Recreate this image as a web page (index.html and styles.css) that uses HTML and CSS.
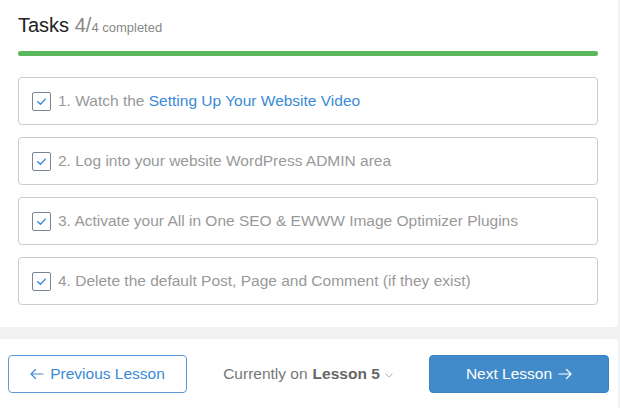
FILE: index.html
```html
<!DOCTYPE html>
<html lang="en">
<head>
    <meta charset="UTF-8">
    <title>Lesson Tasks</title>
    <link rel="stylesheet" href="styles.css">
</head>
<body>
    <div class="card tasks-card">
        <div class="tasks-title">
            Tasks <span class="count">4/</span><span class="count-small">4 completed</span>
        </div>
        <div class="progress"><div class="progress-fill" style="width: 100%;"></div></div>

        <div class="task-list">
            <div class="task">
                <span class="checkbox"><svg viewBox="0 0 12 12" fill="none" stroke="currentColor" stroke-width="1.3" stroke-linecap="round" stroke-linejoin="round"><path d="M2.5 6.2 5 8.5 9.5 3.8"/></svg></span>
                <span class="task-text">1. Watch the <a href="#" class="task-link">Setting Up Your Website Video</a></span>
            </div>
            <div class="task">
                <span class="checkbox"><svg viewBox="0 0 12 12" fill="none" stroke="currentColor" stroke-width="1.3" stroke-linecap="round" stroke-linejoin="round"><path d="M2.5 6.2 5 8.5 9.5 3.8"/></svg></span>
                <span class="task-text">2. Log into your website WordPress ADMIN area</span>
            </div>
            <div class="task">
                <span class="checkbox"><svg viewBox="0 0 12 12" fill="none" stroke="currentColor" stroke-width="1.3" stroke-linecap="round" stroke-linejoin="round"><path d="M2.5 6.2 5 8.5 9.5 3.8"/></svg></span>
                <span class="task-text">3. Activate your All in One SEO &amp; EWWW Image Optimizer Plugins</span>
            </div>
            <div class="task">
                <span class="checkbox"><svg viewBox="0 0 12 12" fill="none" stroke="currentColor" stroke-width="1.3" stroke-linecap="round" stroke-linejoin="round"><path d="M2.5 6.2 5 8.5 9.5 3.8"/></svg></span>
                <span class="task-text">4. Delete the default Post, Page and Comment (if they exist)</span>
            </div>
        </div>
    </div>

    <div class="card lesson-nav">
        <button class="nav-button prev">
            <svg class="arrow" viewBox="0 0 14 12" fill="none" stroke="currentColor" stroke-width="1.2" stroke-linecap="round" stroke-linejoin="round"><path d="M13 6H1M5.5 1.5 1 6l4.5 4.5"/></svg>
            Previous Lesson
        </button>
        <div class="current">Currently on <strong>Lesson 5</strong><svg class="caret" viewBox="0 0 10 6" fill="none" stroke="currentColor" stroke-width="1" stroke-linecap="round" stroke-linejoin="round"><path d="M1 1l4 4 4-4"/></svg></div>
        <button class="nav-button next">
            Next Lesson
            <svg class="arrow" viewBox="0 0 14 12" fill="none" stroke="currentColor" stroke-width="1.2" stroke-linecap="round" stroke-linejoin="round"><path d="M1 6h12M8.5 1.5 13 6l-4.5 4.5"/></svg>
        </button>
    </div>
</body>
</html>
```

FILE: styles.css
```css
body {
    margin: 0;
    background: #f2f2f2;
    font-family: "Liberation Sans", Arial, sans-serif;
    overflow: hidden;
}

.card {
    background: white;
    margin-right: 2px;
}

.tasks-card {
    padding: 12px 20px 22px 18px;
    border-radius: 0 0 4px 0;
}

.tasks-title {
    font-size: 20px;
    line-height: 26px;
    color: #222;
}

.count {
    color: #888;
}

.count-small {
    font-size: 13px;
    color: #888;
}

.progress {
    margin-top: 10px;
    height: 5px;
    border-radius: 3px;
    background: #e5e5e5;
}

.progress-fill {
    height: 100%;
    border-radius: 3px;
    background: #5cb85c;
}

.task-list {
    margin-top: 21px;
    display: flex;
    flex-direction: column;
    gap: 12px;
}

.task {
    height: 46px;
    border: 1px solid #cccccc;
    border-radius: 4px;
    display: flex;
    align-items: center;
    padding-left: 13px;
}

.checkbox {
    width: 17px;
    height: 17px;
    border: 1px solid #7a8594;
    border-radius: 2px;
    color: #3a8ad6;
    display: flex;
    align-items: center;
    justify-content: center;
    margin-right: 7px;
}

.checkbox svg {
    width: 13px;
    height: 13px;
}

.task-text {
    font-size: 15.5px;
    color: #999;
}

.task-link {
    color: #3a8ad6;
    text-decoration: none;
}

.lesson-nav {
    margin-top: 12px;
    padding: 16px 9px 15px 8px;
    border-radius: 0 4px 0 0;
    display: flex;
    justify-content: space-between;
    align-items: center;
}

.nav-button {
    height: 38px;
    border-radius: 4px;
    font-family: inherit;
    font-size: 15.5px;
    cursor: pointer;
    display: flex;
    align-items: center;
    justify-content: center;
    gap: 6px;
}

.arrow {
    width: 14px;
    height: 12px;
}

.nav-button.prev {
    width: 179px;
    background: white;
    border: 1px solid #5b9ad6;
    color: #3a8ad6;
}

.nav-button.next {
    width: 180px;
    background: #428bca;
    border: 1px solid #3c83c2;
    color: white;
}

.current {
    font-size: 15.5px;
    color: #777;
    display: flex;
    align-items: center;
    gap: 5px;
}

.current strong {
    color: #666;
}

.caret {
    width: 8px;
    height: 5px;
    color: #999;
    margin-top: 2px;
}
```
